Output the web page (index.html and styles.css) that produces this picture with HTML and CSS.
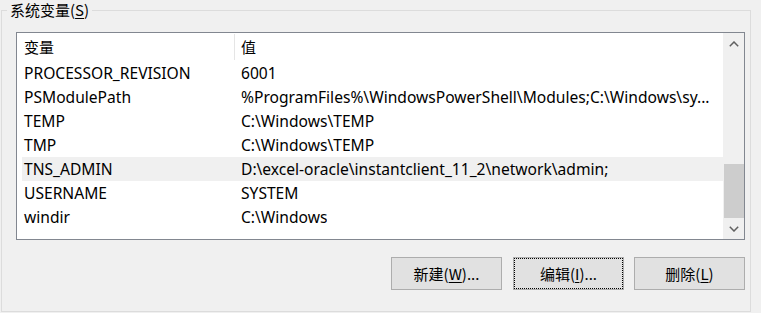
FILE: index.html
```html
<!DOCTYPE html>
<html lang="zh-CN">
<head>
<meta charset="utf-8">
<title>系统变量</title>
<link rel="stylesheet" href="styles.css">
</head>
<body>
<div class="group">
  <span class="group-title">系统变量(<u>S</u>)</span>
  <div class="listbox">
    <div class="list">
      <div class="header">
        <div class="hcell hcell-name">变量</div>
        <div class="hcell hcell-value">值</div>
      </div>
      <div class="row"><span class="c1">PROCESSOR_REVISION</span><span class="c2">6001</span></div>
      <div class="row"><span class="c1">PSModulePath</span><span class="c2">%ProgramFiles%\WindowsPowerShell\Modules;C:\Windows\sy...</span></div>
      <div class="row"><span class="c1">TEMP</span><span class="c2">C:\Windows\TEMP</span></div>
      <div class="row"><span class="c1">TMP</span><span class="c2">C:\Windows\TEMP</span></div>
      <div class="row row-hover"><span class="c1">TNS_ADMIN</span><span class="c2">D:\excel-oracle\instantclient_11_2\network\admin;</span></div>
      <div class="row"><span class="c1">USERNAME</span><span class="c2">SYSTEM</span></div>
      <div class="row"><span class="c1">windir</span><span class="c2">C:\Windows</span></div>
    </div>
    <div class="scrollbar">
      <div class="sb-btn">
        <svg width="10" height="6" viewBox="0 0 10 6"><path d="M0.8 5.2 L5 1 L9.2 5.2" fill="none" stroke="#606060" stroke-width="1.5"/></svg>
      </div>
      <div class="sb-track"><div class="sb-thumb"></div></div>
      <div class="sb-btn">
        <svg width="10" height="6" viewBox="0 0 10 6"><path d="M0.8 0.8 L5 5 L9.2 0.8" fill="none" stroke="#606060" stroke-width="1.5"/></svg>
      </div>
    </div>
  </div>
  <div class="buttons">
    <button class="btn btn-first">新建(<u>W</u>)...</button>
    <button class="btn btn-focus">编辑(<u>I</u>)...</button>
    <button class="btn">删除(<u>L</u>)</button>
  </div>
</div>
</body>
</html>
```
FILE: styles.css
```css
html, body {
  margin: 0;
  padding: 0;
}
body {
  width: 761px;
  height: 313px;
  background: #f0f0f0;
  font-family: "Noto Sans", "Noto Sans CJK SC", sans-serif;
  font-size: 15.6px;
  color: #000;
  overflow: hidden;
}
.group {
  position: relative;
  margin: 10px 0 0 1px;
  width: 750px;
  height: 302px;
  border: 1px solid #dcdcdc;
  padding: 21px 0 0 14px;
  box-sizing: border-box;
}
.group-title {
  position: absolute;
  left: 5px;
  top: -11px;
  padding: 0 3px;
  background: #f0f0f0;
  font-family: "Noto Sans CJK SC", sans-serif;
  font-size: 15px;
  line-height: 20px;
}
.group-title u, .btn u {
  text-decoration-thickness: 1px;
  text-underline-offset: 2px;
}
.listbox {
  display: flex;
  width: 729px;
  height: 208px;
  border: 1px solid #828790;
  box-sizing: border-box;
  background: #fff;
}
.list {
  flex: 1;
  min-width: 0;
  border-right: 1px solid #f0f0f0;
}
.header {
  display: flex;
  height: 28px;
  align-items: center;
}
.hcell {
  font-family: "Noto Sans CJK SC", sans-serif;
  font-size: 15px;
  line-height: 20px;
}
.hcell-name {
  width: 210px;
  padding-left: 7px;
  height: 26px;
  display: flex;
  align-items: center;
  border-right: 1px solid #e5e5e5;
}
.hcell-value {
  padding-left: 6px;
}
.row {
  display: flex;
  height: 24px;
  box-sizing: border-box;
  padding-bottom: 1px;
  align-items: center;
  margin-left: 5px;
  padding-left: 2px;
  white-space: nowrap;
  line-height: 20px;
}
.row-hover {
  background: #f0f0f0;
}
.c1 {
  width: 217px;
  flex: none;
}
.c2 {
  overflow: hidden;
}
.scrollbar {
  width: 20px;
  display: flex;
  flex-direction: column;
  background: #f0f0f0;
}
.sb-btn {
  height: 21px;
  display: flex;
  align-items: center;
  justify-content: center;
  flex: none;
}
.sb-track {
  flex: 1;
  display: flex;
  flex-direction: column;
}
.sb-thumb {
  margin-top: auto;
  height: 54px;
  background: #cdcdcd;
}
.buttons {
  display: flex;
  justify-content: flex-end;
  gap: 10px;
  width: 729px;
  margin-top: 17px;
}
.btn {
  width: 111px;
  height: 33px;
  border: 1px solid #adadad;
  background: #e1e1e1;
  font-family: "Noto Sans CJK SC", sans-serif;
  font-size: 15px;
  color: #000;
  padding: 0;
}
.btn-first {
  margin-right: 1px;
}
.btn-focus {
  outline: 1px dotted #000;
  outline-offset: -2px;
}
```
